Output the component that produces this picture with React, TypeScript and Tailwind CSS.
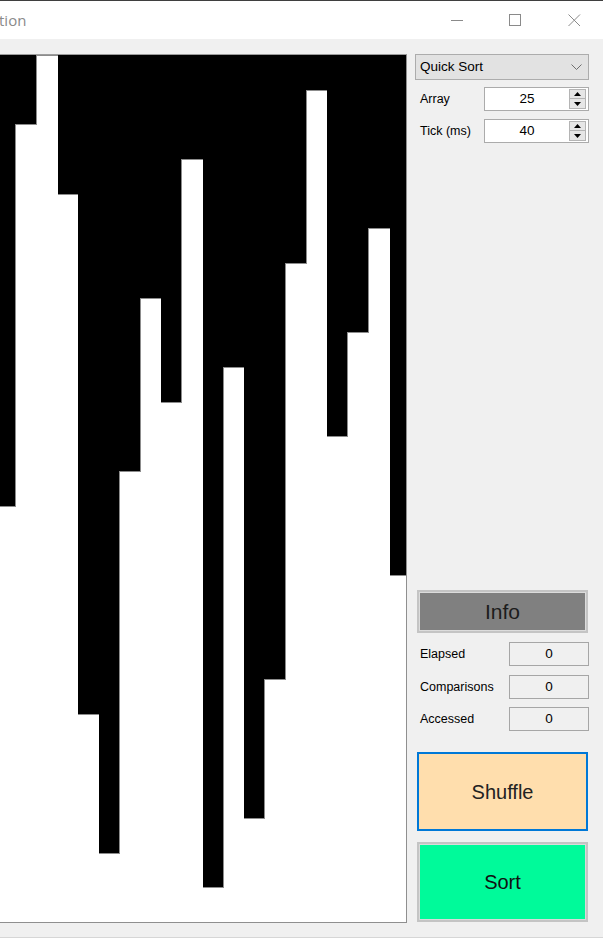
import React from "react";

const VALUES = [8, 4, 11, 5, 9, 12, 23, 25, 21, 6, 2, 13, 18, 15, 22, 1, 16, 3, 7, 19, 24, 14, 17, 20, 10];
const MAX = 25;
const CW = 406;
const CH = 867;
const COL = 20.75;
const OFF = -109.5;

function SpinButtons() {
  return (
    <div className="flex flex-col w-[17px] h-[20px] mr-[2px]">
      <div className="h-[10px] border border-[#b4b4b4] bg-[#e6e6e6] flex items-center justify-center">
        <svg width="7" height="4" viewBox="0 0 7 4">
          <polygon points="3.5,0 7,4 0,4" fill="#000" />
        </svg>
      </div>
      <div className="h-[10px] border border-t-0 border-[#b4b4b4] bg-[#e6e6e6] flex items-center justify-center">
        <svg width="7" height="4" viewBox="0 0 7 4">
          <polygon points="0,0 7,0 3.5,4" fill="#000" />
        </svg>
      </div>
    </div>
  );
}

function NumRow({ label, value, className }: { label: string; value: string; className: string }) {
  return (
    <div className={"flex items-center h-[24px] " + className}>
      <div className="w-[69px] pl-[5px] text-[12.5px] text-black">{label}</div>
      <div className="flex items-center w-[105px] h-[24px] border border-[#ababab] bg-white">
        <div className="flex-1 text-center text-[13.5px] text-black">{value}</div>
        <SpinButtons />
      </div>
    </div>
  );
}

function StatRow({ label, className }: { label: string; className: string }) {
  return (
    <div className={"flex items-center h-[24px] " + className}>
      <div className="w-[94px] pl-[5px] text-[12.5px] text-black whitespace-nowrap">{label}</div>
      <div className="w-[80px] h-[24px] border border-[#a6a6a6] bg-[#f0f0f0] flex items-center justify-center text-[13.5px] text-black">
        0
      </div>
    </div>
  );
}

function BarChart() {
  const bars = VALUES.map((v, i) => {
    const x = Math.round(OFF + i * COL);
    const x2 = Math.round(OFF + (i + 1) * COL);
    const h = Math.round((v / MAX) * CH);
    return { x, w: x2 - x, y: CH - h, h };
  });
  return (
    <svg width={CW} height={CH} viewBox={`0 0 ${CW} ${CH}`} shapeRendering="crispEdges" className="block">
      <rect x="0" y="0" width={CW} height={CH} fill="#000" />
      {bars.map((b, i) => (
        <rect key={"o" + i} x={b.x} y={b.y} width={b.w + 1} height={b.h + 1} fill="#8c8c8c" />
      ))}
      {bars.map((b, i) => (
        <rect key={"w" + i} x={b.x + 1} y={b.y + 1} width={b.w} height={b.h} fill="#fff" />
      ))}
    </svg>
  );
}

export default function App() {
  return (
    <div
      className="w-[603px] h-[938px] flex flex-col bg-[#f0f0f0] overflow-hidden"
      style={{ fontFamily: '"Liberation Sans", Arial, sans-serif' }}
    >
      <div className="h-px bg-[#3f3f3f]" />
      {/* title bar */}
      <div className="h-[38px] bg-white flex items-center">
        <span
          className="ml-[-1px] text-[15px] text-[#8a8a8a]"
          style={{ fontFamily: '"Open Sans", "Noto Sans", sans-serif' }}
        >
          tion
        </span>
        <div className="ml-auto flex items-center h-full">
          <svg width="13" height="13" viewBox="0 0 13 13" className="mr-[45px]">
            <line x1="0" y1="6.5" x2="12" y2="6.5" stroke="#8a8a8a" strokeWidth="1" />
          </svg>
          <svg width="13" height="13" viewBox="0 0 13 13" className="mr-[46px]">
            <rect x="0.5" y="0.5" width="11" height="11" fill="none" stroke="#8a8a8a" strokeWidth="1" />
          </svg>
          <svg width="13" height="13" viewBox="0 0 13 13" className="mr-[22px]">
            <line x1="0.5" y1="0.5" x2="12" y2="12" stroke="#8a8a8a" strokeWidth="1" />
            <line x1="12" y1="0.5" x2="0.5" y2="12" stroke="#8a8a8a" strokeWidth="1" />
          </svg>
        </div>
      </div>

      {/* client area */}
      <div className="flex-1 flex items-start">
        {/* canvas */}
        <div className="mt-[15px] w-[407px] h-[869px] border-t border-r border-b border-t-[#9c9c9c] border-r-[#8f8f8f] border-b-[#8f8f8f] bg-black overflow-hidden">
          <BarChart />
        </div>

        {/* right panel */}
        <div className="ml-[8px] mt-[15px] w-[174px] flex flex-col">
          <div className="h-[26px] border border-[#acacac] bg-[#e2e2e2] flex items-center pl-[4px] pr-[6px]">
            <span className="text-[13.5px] text-black">Quick Sort</span>
            <svg width="11" height="7" viewBox="0 0 11 7" className="ml-auto">
              <polyline points="0.5,0.5 5.5,5.5 10.5,0.5" fill="none" stroke="#6e6e6e" strokeWidth="1" />
            </svg>
          </div>
          <NumRow label="Array" value="25" className="mt-[7px]" />
          <NumRow label="Tick (ms)" value="40" className="mt-[8px]" />

          <div className="mt-[447px] ml-[2px] w-[171px] h-[43px] border-2 border-[#c4c4c4] bg-[#dcdcdc] p-px">
            <div className="w-full h-full bg-[#808080] flex items-center justify-center text-[21px] text-[#1c1c1c]">
              Info
            </div>
          </div>

          <StatRow label="Elapsed" className="mt-[9px]" />
          <StatRow label="Comparisons" className="mt-[9px]" />
          <StatRow label="Accessed" className="mt-[8px]" />

          <div className="mt-[21px] ml-[2px] w-[171px] h-[79px] border-2 border-[#0078d7] bg-[#ffdead] flex items-center justify-center text-[20px] text-[#222]">
            Shuffle
          </div>
          <div className="mt-[11px] ml-[2px] w-[171px] h-[80px] border-2 border-[#c4c4c4] bg-[#dadada] p-px">
            <div className="w-full h-full bg-[#00fa9a] flex items-center justify-center text-[20px] text-[#111]">
              Sort
            </div>
          </div>
        </div>
      </div>
      <div className="h-px bg-[#d6d6d6]" />
    </div>
  );
}
